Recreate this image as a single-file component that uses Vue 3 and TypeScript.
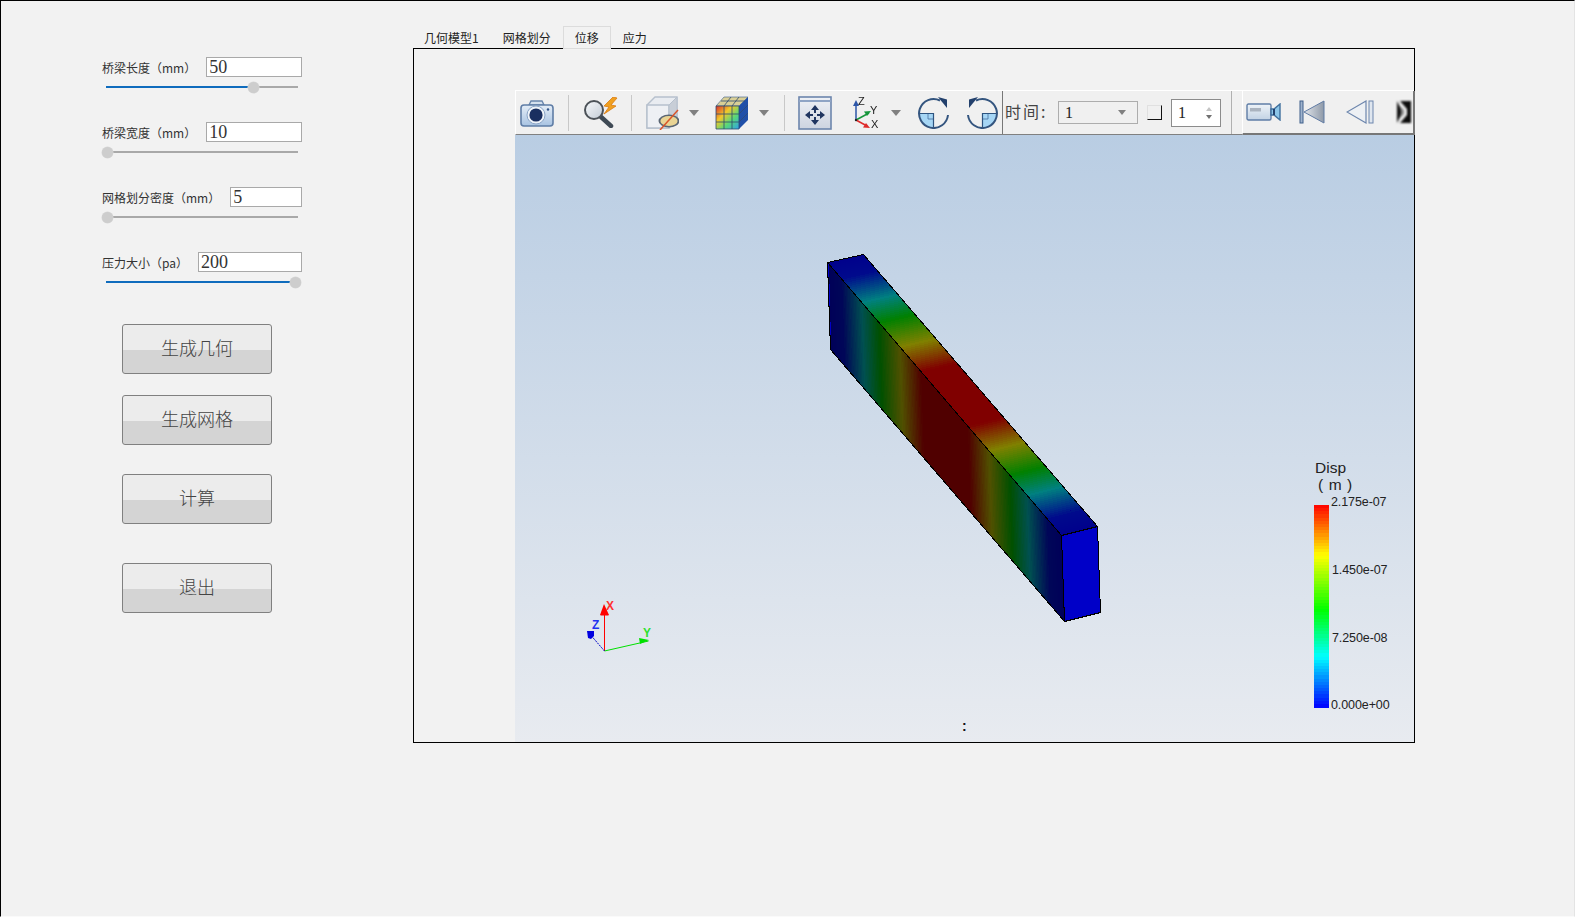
<template>
  <div class="window">
    <aside class="side">
      <div class="param" v-for="p in params" :key="p.label">
        <div class="param__head">
          <label>{{ p.label }}</label>
          <input type="text" :value="p.value" readonly />
        </div>
        <div class="slider">
          <div class="slider__fill" :style="{ width: p.pos * 100 + '%' }"></div>
          <div class="slider__rail">
            <span class="slider__knob" :style="{ left: p.pos * 100 + '%' }"></span>
          </div>
        </div>
      </div>
      <div class="actions">
        <button type="button" v-for="b in buttons" :key="b">{{ b }}</button>
      </div>
    </aside>

    <main class="main">
      <div class="tabs">
        <div
          v-for="t in tabs"
          :key="t"
          class="tabs__item"
          :class="{ 'tabs__item--active': t === activeTab }"
        >{{ t }}</div>
      </div>
      <div class="frame">
        <div class="viewer">
          <div class="toolbar">
            <svg class="i-camera" width="34" height="28" viewBox="0 0 34 28">
              <defs>
                <linearGradient id="camBody" x1="0" y1="0" x2="0" y2="1">
                  <stop offset="0" stop-color="#e4edf7" />
                  <stop offset="1" stop-color="#a8c3e2" />
                </linearGradient>
              </defs>
              <path d="M9 6l2-4h11l2 4z" fill="#d5e1ee" stroke="#6a87ad" stroke-width="1.4" />
              <rect x="1" y="6" width="32" height="21" rx="3" fill="url(#camBody)" stroke="#5f7da6" stroke-width="1.6" />
              <circle cx="16" cy="16" r="9" fill="#eef3f9" stroke="#8ba5c7" />
              <circle cx="16" cy="16" r="6.6" fill="#1a2f60" />
              <circle cx="28" cy="10.5" r="1.2" fill="#34568a" />
            </svg>
            <span class="sep sep--a"></span>
            <svg class="i-search" width="37" height="31" viewBox="0 0 37 31">
              <defs>
                <linearGradient id="lensFill" x1="0" y1="0" x2="1" y2="1">
                  <stop offset="0" stop-color="#f7f9fb" />
                  <stop offset="1" stop-color="#c3ccd6" />
                </linearGradient>
              </defs>
              <path d="M17 19l11 10" stroke="#3f4a55" stroke-width="4.5" stroke-linecap="round" />
              <circle cx="11" cy="13" r="9" fill="url(#lensFill)" stroke="#4c5258" stroke-width="2" />
              <path d="M30 0l-9 9 5 1-5 7 12-8-5-1 6-7z" fill="#f0a020" stroke="#d97a10" stroke-width=".8" />
            </svg>
            <span class="sep sep--b"></span>
            <svg class="i-box" width="33" height="34" viewBox="0 0 33 34">
              <path d="M1 9l8-8h22v22l-8 9H1z" fill="#e9ecf1" stroke="#b6c0cd" stroke-width="1.4" />
              <path d="M1 9h22v23H1z" fill="#eef0f4" stroke="#b6c0cd" stroke-width="1.4" />
              <path d="M23 9l8-8v22l-8 9z" fill="#c8ced7" stroke="#b6c0cd" />
              <ellipse cx="23" cy="25" rx="10.500" ry="6.500" fill="#5a6674" />
              <ellipse cx="23" cy="25" rx="8.600" ry="5" fill="#e9d494" />
              <path d="M14 34L32 14" stroke="#d9542a" stroke-width="1.5" />
            </svg>
            <span class="drop drop--a"></span>
            <svg class="i-cube" width="34" height="34" viewBox="0 0 34 34">
              <defs>
                <linearGradient id="cubeFace" x1="0" y1="0" x2="1" y2="1">
                  <stop offset="0" stop-color="#d8302c" />
                  <stop offset=".35" stop-color="#f3c82a" />
                  <stop offset=".65" stop-color="#58d878" />
                  <stop offset="1" stop-color="#2f9fea" />
                </linearGradient>
              </defs>
              <path d="M1 10l8-9h24l-9 9z" fill="#d9cf96" stroke="#3a5a8a" stroke-width=".6" />
              <rect x="1" y="10" width="23" height="23" fill="url(#cubeFace)" />
              <path d="M24 10l9-9v23l-9 9z" fill="#1f4fa8" />
              <path d="M1 10h23v23H1zM9 10v23M17 10v23M1 18h23M1 26h23M24 18l9-9M24 26l9-9M9 1l-0 0M16 1l-7 9M24 1l-7 9M6 5h24" fill="none" stroke="#2f4a70" stroke-width=".8" />
            </svg>
            <span class="drop drop--b"></span>
            <span class="sep sep--c"></span>
            <svg class="i-move" width="34" height="34" viewBox="0 0 34 34">
              <defs>
                <linearGradient id="moveBg" x1="0" y1="0" x2="0" y2="1">
                  <stop offset="0" stop-color="#eef1f6" />
                  <stop offset="1" stop-color="#cdd4e0" />
                </linearGradient>
              </defs>
              <rect x="1" y="1" width="32" height="32" fill="url(#moveBg)" stroke="#6d86ad" stroke-width="1.6" />
              <path d="M1 5h32" stroke="#8ea4c5" stroke-width="2" />
              <path d="M17 9l4 5h-3v3h-2v-3h-3zM17 29l-4-5h3v-3h2v3h3zM7 19l5-4v3h3v2h-3v3zM27 19l-5 4v-3h-3v-2h3v-3z" fill="#1f3560" />
            </svg>
            <svg class="i-axes" width="28" height="34" viewBox="0 0 28 34">
              <path d="M4 24V8" stroke="#2c56a8" stroke-width="1.5" />
              <path d="M4 4l-3 6h6z" fill="#2c56a8" />
              <path d="M4 24l13-7" stroke="#16963c" stroke-width="1.5" />
              <path d="M19 15l-7 .5 3 4.500z" fill="#16963c" />
              <path d="M4 24l11 6" stroke="#de2a2a" stroke-width="1.5" />
              <path d="M18 32l-7-.5 3-4.500z" fill="#de2a2a" />
              <circle cx="4" cy="24" r="1.2" fill="#222" />
              <text x="6" y="9" class="axis-label">Z</text>
              <text x="18" y="18" class="axis-label">Y</text>
              <text x="19" y="32" class="axis-label">X</text>
            </svg>
            <span class="drop drop--c"></span>
            <svg class="i-rot" width="31" height="33" viewBox="0 0 31 33">
              <path d="M15.500 17.500H1a14.500 14.500 0 0 0 14.500 14.500z" fill="#a6d6f5" />
              <path d="M10 17.500v5.500h5.500" fill="none" stroke="#46709f" stroke-width=".8" />
              <path d="M1 17.500h14.500V32" fill="none" stroke="#2e5480" stroke-width="1.200" />
              <path d="M30 19A14.500 14.500 0 1 1 22 4.500" fill="none" stroke="#34557f" stroke-width="2" />
              <path d="M20 1l9 2.500V12z" fill="#23406c" />
            </svg>
            <svg class="i-rot i-rot--b" width="31" height="33" viewBox="0 0 31 33">
              <path d="M15.500 17.500H30a14.500 14.500 0 0 1-14.500 14.500z" fill="#a6d6f5" />
              <path d="M21 17.500v5.500h-5.500" fill="none" stroke="#46709f" stroke-width=".8" />
              <path d="M30 17.500H15.500V32" fill="none" stroke="#2e5480" stroke-width="1.200" />
              <path d="M1 19A14.500 14.500 0 1 0 9 4.500" fill="none" stroke="#34557f" stroke-width="2" />
              <path d="M11 1L2 3.500V12z" fill="#23406c" />
            </svg>
            <span class="sep sep--dark"></span>
            <span class="time-label">时间:</span>
            <div class="combo">1<span class="combo__arrow"></span></div>
            <span class="check"></span>
            <div class="spin">
              1
              <span class="spin__arrows"><i></i><i></i></span>
            </div>
            <span class="sep sep--full"></span>
            <div class="player">
              <svg class="i-video" width="35" height="18" viewBox="0 0 35 18">
                <defs>
                  <linearGradient id="vidBody" x1="0" y1="0" x2="0" y2="1">
                    <stop offset="0" stop-color="#eef3f8" />
                    <stop offset="1" stop-color="#c2d2e4" />
                  </linearGradient>
                </defs>
                <rect x="1" y="1" width="24" height="16" rx="1.500" fill="url(#vidBody)" stroke="#5f7da6" stroke-width="1.400" />
                <rect x="4" y="5" width="11" height="3.500" fill="#aab3bf" />
                <path d="M25 6h3l6-5v16l-6-5h-3z" fill="#8cc5e8" stroke="#3f6f9d" stroke-width="1.400" />
                <path d="M28 6v6" stroke="#23406c" stroke-width="2" />
              </svg>
              <svg class="i-first" width="26" height="24" viewBox="0 0 26 24">
                <defs>
                  <linearGradient id="triDark" x1="0" y1="0" x2="1" y2="0">
                    <stop offset="0" stop-color="#e2e6eb" />
                    <stop offset="1" stop-color="#8e99a8" />
                  </linearGradient>
                </defs>
                <rect x="1" y="1" width="3" height="22" fill="#9fb3cd" stroke="#3f5f8a" />
                <path d="M25 1v22L5 12z" fill="url(#triDark)" stroke="#5f7aa3" />
              </svg>
              <svg class="i-prev" width="28" height="24" viewBox="0 0 28 24">
                <path d="M20 1v22L1 12z" fill="#edf0f4" stroke="#6d86ad" stroke-width="1.200" />
                <rect x="23" y="1" width="4" height="22" fill="#dfe6ef" stroke="#6d86ad" />
              </svg>
              <svg class="i-next" width="14" height="22" viewBox="0 0 14 22">
                <rect width="14" height="22" fill="#0c0c0c" />
                <path d="M0 0h3l7 8v6l-7 8H0l4-8V8z" fill="#f2f2f2" />
                <path d="M3 5l4 4v4l-4 4 1-6z" fill="#8a8a8a" />
              </svg>
            </div>
          </div>
          <div class="scene">
            <svg class="scene__canvas" viewBox="515 135 899 607">
              <g shape-rendering="crispEdges">
                <polygon :points="topFace" fill="#00008c" />
                <polygon :points="frontFace" fill="#000058" />
                <polygon
                  v-for="s in topSlices"
                  :key="'t' + s.points"
                  :points="s.points"
                  :fill="s.fill"
                />
                <polygon
                  v-for="s in frontSlices"
                  :key="'f' + s.points"
                  :points="s.points"
                  :fill="s.fill"
                />
                <polygon points="827,263 829,264 831,340 830,349" fill="#0000c8" />
                <polygon :points="endFace" fill="#0000c8" />
                <polygon :points="topFace" fill="none" stroke="#000" />
                <polygon :points="frontFace" fill="none" stroke="#000" />
                <polygon :points="endFace" fill="none" stroke="#000" />
                <rect
                  v-for="(c, i) in legendBands"
                  :key="i"
                  x="1314"
                  :y="505 + i * bandHeight"
                  width="15"
                  :height="bandHeight + 0.5"
                  :fill="c"
                />
              </g>

              <g class="legend-text">
                <text x="1315" y="473" class="legend-title">Disp</text>
                <text x="1318" y="490" class="legend-title legend-title--unit">( m )</text>
                <text x="1331" y="506">2.175e-07</text>
                <text x="1332" y="574">1.450e-07</text>
                <text x="1332" y="642">7.250e-08</text>
                <text x="1331" y="709">0.000e+00</text>
              </g>

              <path d="M604.500 651V610" stroke="#ff0000" fill="none" />
              <path d="M604 604l-4 11 1 .5h7l1-.5z" fill="#ff0000" />
              <text x="606" y="610" class="triad" fill="#ff3030">X</text>
              <path d="M604.500 651l44-10" stroke="#00e000" fill="none" />
              <path d="M649 640l-10-2 1 6z" fill="#00e000" />
              <text x="643" y="637" class="triad" fill="#30e030">Y</text>
              <path d="M604.500 651l-13-15" stroke="#0000c8" stroke-dasharray="2 1" fill="none" />
              <path d="M587 631h7v5l-3 3-3-1z" fill="#0000e0" />
              <text x="592" y="629" class="triad" fill="#2030f0">Z</text>
              <text x="962" y="731" class="colon">:</text>
            </svg>
          </div>
        </div>
      </div>
    </main>
  </div>
</template>

<script setup lang="ts">
type Param = { label: string; value: string; pos: number };
type Rgb = [number, number, number];
type Stop = [number, Rgb];
type Pt = [number, number];

const params: Param[] = [
  { label: "桥梁长度（mm）", value: "50", pos: 0.777 },
  { label: "桥梁宽度（mm）", value: "10", pos: 0 },
  { label: "网格划分密度（mm）", value: "5", pos: 0 },
  { label: "压力大小（pa）", value: "200", pos: 1 },
];
const buttons = ["生成几何", "生成网格", "计算", "退出"];
const tabs = ["几何模型1", "网格划分", "位移", "应力"];
const activeTab = "位移";

function sample(stops: Stop[], t: number): Rgb {
  for (let i = 1; i < stops.length; i++) {
    if (t <= stops[i][0]) {
      const [t0, a] = stops[i - 1];
      const [t1, b] = stops[i];
      const k = (t - t0) / (t1 - t0);
      return [a[0] + (b[0] - a[0]) * k, a[1] + (b[1] - a[1]) * k, a[2] + (b[2] - a[2]) * k];
    }
  }
  return stops[stops.length - 1][1];
}

function css(c: Rgb, scale = 1) {
  return `rgb(${Math.round(c[0] * scale)},${Math.round(c[1] * scale)},${Math.round(c[2] * scale)})`;
}

// colour along the beam, read from the top face
const beamStops: Stop[] = [
  [0, [0, 0, 140]],
  [0.06, [0, 10, 140]],
  [0.147, [0, 128, 128]],
  [0.22, [0, 128, 0]],
  [0.31, [128, 128, 0]],
  [0.4, [128, 0, 0]],
  [0.6, [128, 0, 0]],
  [0.69, [128, 128, 0]],
  [0.78, [0, 128, 0]],
  [0.853, [0, 128, 128]],
  [0.94, [0, 10, 140]],
  [1, [0, 0, 140]],
];

const A: Pt = [827.5, 262.5];
const B: Pt = [863.5, 254.5];
const C: Pt = [1097.5, 526.5];
const D: Pt = [1061.5, 535.5];
const E: Pt = [1064.5, 621.5];
const F: Pt = [830.5, 349.5];
const G: Pt = [1100.5, 612.5];

const lerp = (p: Pt, q: Pt, t: number): Pt => [p[0] + (q[0] - p[0]) * t, p[1] + (q[1] - p[1]) * t];
const pts = (...list: Pt[]) => list.map((p) => p.join(",")).join(" ");

function slices(p0: Pt, p1: Pt, q0: Pt, q1: Pt, scale: number) {
  const n = 160;
  return Array.from({ length: n }, (_, i) => {
    const a = i / n;
    const b = (i + 1) / n;
    return {
      points: pts(lerp(p0, p1, a), lerp(p0, p1, b), lerp(q0, q1, b), lerp(q0, q1, a)),
      fill: css(sample(beamStops, (a + b) / 2), scale),
    };
  });
}

const topSlices = slices(A, D, B, C, 1);
const frontSlices = slices(A, D, F, E, 0.625);
const topFace = pts(A, B, C, D);
const frontFace = pts(A, D, E, F);
const endFace = pts(D, C, G, E);

const legendStops: Stop[] = [
  [0, [255, 0, 0]],
  [0.25, [255, 255, 0]],
  [0.52, [0, 255, 0]],
  [0.75, [0, 255, 255]],
  [1, [0, 0, 255]],
];
const bandCount = 64;
const bandHeight = 202 / bandCount;
const legendBands = Array.from({ length: bandCount }, (_, i) =>
  css(sample(legendStops, (i + 0.5) / bandCount))
);
</script>

<style scoped>
.window {
  box-sizing: border-box;
  width: 1575px;
  height: 917px;
  display: flex;
  background: #f2f2f2;
  border-left: 1px solid #000;
  border-top: 1px solid #000;
  border-right: 1px solid #e4e4e4;
  border-bottom: 1px solid #fafafa;
  font-family: "Liberation Serif", "Noto Sans CJK SC", serif;
  overflow: hidden;
}

.side {
  box-sizing: border-box;
  width: 412px;
  flex: none;
  padding: 56px 111px 0 101px;
}

.param {
  height: 65px;
}

.param__head {
  display: flex;
  align-items: center;
  gap: 10px;
  height: 20px;
}

.param__head label {
  font-family: "Noto Sans CJK SC", sans-serif;
  font-size: 12px;
  color: #333;
  white-space: nowrap;
}

.param__head input {
  box-sizing: border-box;
  flex: 1;
  min-width: 0;
  height: 20px;
  padding: 0 2px;
  border: 1px solid #a9a9a9;
  border-radius: 0;
  outline: none;
  background: #fff;
  font-family: "Liberation Serif", serif;
  font-size: 18px;
  color: #333;
}

.slider {
  position: relative;
  height: 2px;
  margin: 9px 4px 0 4px;
  background: #a9a9a9;
}

.slider__fill {
  position: absolute;
  left: 0;
  top: 0;
  height: 2px;
  background: #0f6cbd;
}

.slider__rail {
  position: absolute;
  left: 1px;
  right: 3px;
  top: 1px;
}

.slider__knob {
  position: absolute;
  width: 11px;
  height: 11px;
  margin: -5.5px 0 0 -5.5px;
  border-radius: 50%;
  background: #cdcdcd;
  box-shadow: 0 0 0 0.5px #d8d8d8;
}

.actions {
  display: flex;
  flex-direction: column;
  margin: 7px 0 0 20px;
}

.actions button {
  box-sizing: border-box;
  width: 150px;
  height: 50px;
  padding: 0 0 4px;
  border: 1px solid #808080;
  border-radius: 3px;
  background: linear-gradient(#ececec 0, #ececec 52%, #d4d4d4 52%, #d4d4d4 100%);
  font-family: "Noto Sans CJK SC", sans-serif;
  font-size: 18px;
  font-weight: 300;
  color: #444;
}

.actions button:nth-child(2) {
  margin-top: 21px;
}

.actions button:nth-child(3) {
  margin-top: 29px;
}

.actions button:nth-child(4) {
  margin-top: 39px;
}

.main {
  box-sizing: border-box;
  width: 1002px;
  flex: none;
  padding-top: 25px;
}

.tabs {
  display: flex;
  height: 22px;
  margin-left: -1px;
}

.tabs__item {
  box-sizing: border-box;
  height: 23px;
  padding: 2px 12px 0;
  font-family: "Noto Sans CJK SC", sans-serif;
  font-size: 12px;
  line-height: 20px;
  color: #222;
  position: relative;
}

.tabs__item--active {
  padding: 1px 11px 0;
  background: #f2f2f2;
  border: 1px solid #dcdcdc;
  z-index: 1;
}

.frame {
  box-sizing: border-box;
  height: 695px;
  padding: 41px 0 0 101px;
  border: 1px solid #000;
}

.viewer {
  height: 100%;
  display: flex;
  flex-direction: column;
}

.toolbar {
  box-sizing: border-box;
  height: 45px;
  flex: none;
  display: flex;
  align-items: center;
  padding-left: 5px;
  background: #f0f0f0;
  border-top: 1px solid #fff;
  border-left: 1px solid #fff;
  border-bottom: 1px solid #808080;
}

.toolbar svg {
  flex: none;
  display: block;
  filter: blur(0.3px);
}

.toolbar .i-next {
  filter: blur(0.8px);
}

.sep {
  flex: none;
  width: 1px;
  height: 36px;
  background: #c8c8c8;
}

.sep--a {
  margin-left: 14px;
}

.sep--b {
  margin-left: 11px;
}

.sep--c {
  margin-left: 15px;
}

.sep--dark {
  align-self: stretch;
  height: auto;
  margin-left: 4px;
  background: #777;
}

.sep--full {
  align-self: stretch;
  height: auto;
  margin-left: 10px;
  background: #b0b0b0;
}

.i-camera {
  margin-left: -1px;
}

.i-search {
  margin-left: 14px;
}

.i-box {
  margin-left: 14px;
}

.i-cube {
  margin-left: 16px;
}

.i-move {
  margin-left: 13px;
}

.i-axes {
  margin-left: 20px;
}

.i-rot {
  margin-left: 17px;
}

.i-rot--b {
  margin-left: 18px;
}

.drop {
  flex: none;
  width: 0;
  height: 0;
  border-left: 5px solid transparent;
  border-right: 5px solid transparent;
  border-top: 6px solid #808080;
}

.drop--a,
.drop--b {
  margin-left: 10px;
}

.drop--c {
  margin-left: 11px;
}

.axis-label {
  font-family: "Liberation Sans", sans-serif;
  font-size: 11px;
  fill: #222;
}

.time-label {
  flex: none;
  width: 42px;
  margin: -3px 0 0 2px;
  font-family: "Noto Sans CJK SC", sans-serif;
  font-size: 16px;
  letter-spacing: 2px;
  color: #444;
  white-space: nowrap;
}

.combo {
  box-sizing: border-box;
  position: relative;
  flex: none;
  width: 80px;
  height: 23px;
  margin-left: 11px;
  padding-left: 6px;
  border: 1px solid #adadad;
  background: #f0f0f0;
  font-size: 16px;
  line-height: 21px;
  color: #222;
}

.combo__arrow {
  position: absolute;
  right: 11px;
  top: 8px;
  width: 0;
  height: 0;
  border-left: 4px solid transparent;
  border-right: 4px solid transparent;
  border-top: 5px solid #808080;
}

.check {
  box-sizing: border-box;
  flex: none;
  width: 15px;
  height: 15px;
  margin-left: 9px;
  border-top: 1px solid #e0e0e0;
  border-left: 1px solid #e0e0e0;
  border-right: 1px solid #111;
  border-bottom: 1px solid #111;
}

.spin {
  box-sizing: border-box;
  position: relative;
  flex: none;
  width: 50px;
  height: 28px;
  margin-left: 9px;
  padding-left: 6px;
  border: 1px solid #8c8c8c;
  background: #fff;
  font-size: 16px;
  line-height: 26px;
  color: #222;
}

.spin__arrows {
  position: absolute;
  right: 8px;
  top: 7px;
  display: flex;
  flex-direction: column;
  gap: 4px;
}

.spin__arrows i {
  display: block;
  width: 0;
  height: 0;
  border-left: 3px solid transparent;
  border-right: 3px solid transparent;
  border-bottom: 4px solid #c4c4c4;
}

.spin__arrows i:last-child {
  border-bottom: 0;
  border-top: 4px solid #707070;
}

.player {
  box-sizing: border-box;
  flex: none;
  align-self: stretch;
  display: flex;
  align-items: center;
  width: 173px;
  margin: 0 0 -1px 10px;
  padding-left: 3px;
  overflow: hidden;
  border-left: 1px solid #fff;
  border-right: 2px solid #777;
  border-bottom: 2px solid #777;
}

.i-first {
  margin-left: 18px;
}

.i-prev {
  margin-left: 21px;
}

.i-next {
  margin-left: 23px;
}

.scene {
  position: relative;
  flex: 1;
  background: linear-gradient(#b9cde3, #e8ebf0);
}

.scene__canvas {
  position: absolute;
  inset: 0;
  width: 100%;
  height: 100%;
}

.legend-text text {
  font-family: "Liberation Sans", sans-serif;
  font-size: 12.5px;
  letter-spacing: -0.1px;
  fill: #222;
}

.legend-text .legend-title {
  font-size: 15.5px;
  letter-spacing: 0;
}

.legend-text .legend-title--unit {
  letter-spacing: 0.6px;
}

.triad {
  font-family: "Liberation Sans", sans-serif;
  font-size: 12px;
  font-weight: 700;
}

.colon {
  font-family: "Liberation Sans", sans-serif;
  font-size: 14px;
  font-weight: 700;
  fill: #111;
}
</style>
